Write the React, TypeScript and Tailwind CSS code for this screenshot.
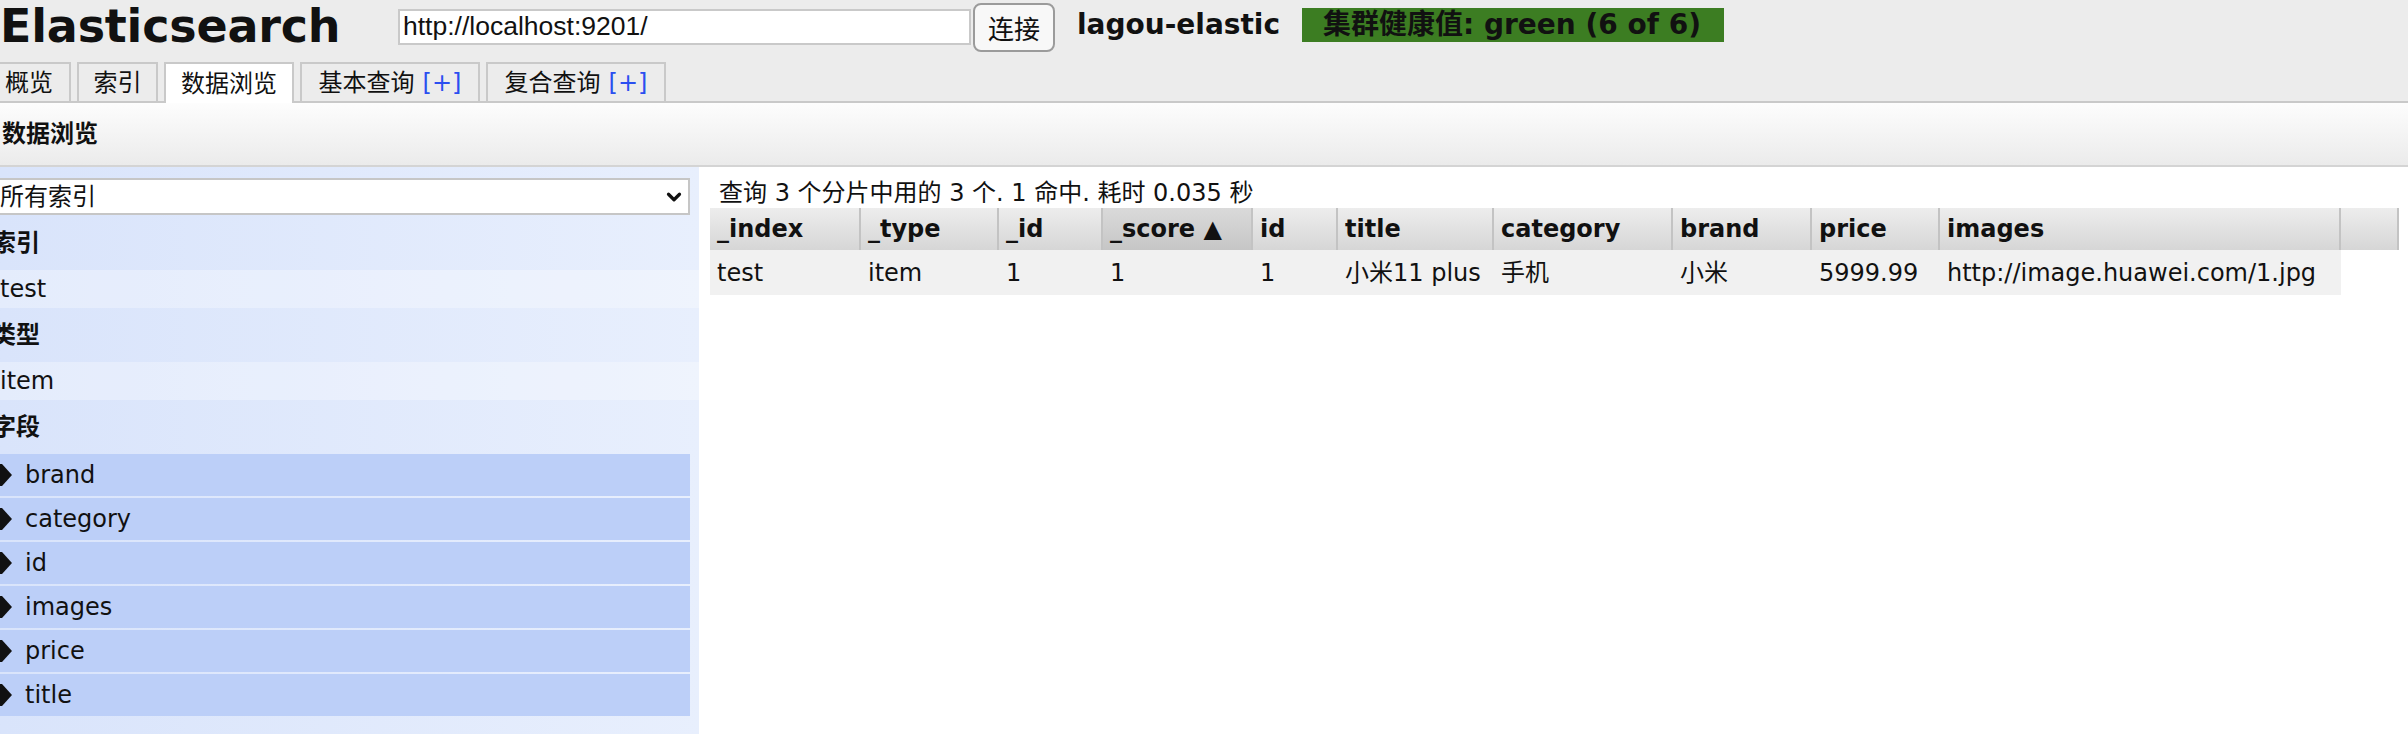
import { ChevronDown } from 'lucide-react'

const tabs = [
  { label: '概览', w: 'w-[84px]', active: false, plus: false },
  { label: '索引', w: 'w-[81px]', active: false, plus: false },
  { label: '数据浏览', w: 'w-[130px]', active: true, plus: false },
  { label: '基本查询', w: 'w-[180px]', active: false, plus: true },
  { label: '复合查询', w: 'w-[180px]', active: false, plus: true },
]

const columns = [
  { key: '_index', w: 'w-[151px]', value: 'test' },
  { key: '_type', w: 'w-[138px]', value: 'item' },
  { key: '_id', w: 'w-[104px]', value: '1' },
  { key: '_score ▲', w: 'w-[150px]', value: '1', sorted: true },
  { key: 'id', w: 'w-[85px]', value: '1' },
  { key: 'title', w: 'w-[156px]', value: '小米11 plus' },
  { key: 'category', w: 'w-[179px]', value: '手机' },
  { key: 'brand', w: 'w-[139px]', value: '小米' },
  { key: 'price', w: 'w-[128px]', value: '5999.99' },
  { key: 'images', w: 'w-[401px]', value: 'http://image.huawei.com/1.jpg' },
]

const fields = ['brand', 'category', 'id', 'images', 'price', 'title']

function Arrow() {
  return (
    <svg width="20" height="22" viewBox="0 0 20 22" className="-ml-[7px] shrink-0">
      <polygon points="0,0 9,0 19,11 9,22 0,22" fill="#111" />
    </svg>
  )
}

function SectionHeader({ label, h }: { label: string; h: string }) {
  return (
    <div className={`${h} flex items-center -ml-[8px] font-bold`}>{label}</div>
  )
}

function SectionValue({ label }: { label: string }) {
  return <div className="h-[38px] flex items-center bg-white/30 w-[699px]">{label}</div>
}

export default function App() {
  return (
    <div className="w-[2408px] h-[734px] overflow-hidden bg-white text-[#111] font-['DejaVu_Sans','Noto_Sans_CJK_SC',sans-serif] text-[24px]">
      {/* header */}
      <div className="bg-[#ececec]">
        <div className="h-[62px] flex items-start">
          <h1 className="w-[398px] h-[52px] text-[46px] leading-[52px] font-bold tracking-[-0.2px] whitespace-nowrap">Elasticsearch</h1>
          <div className="mt-[9px] w-[573px] h-[36px] bg-white border-2 border-[#c9c9c9] pl-[3px] flex items-center font-['Liberation_Sans',sans-serif] text-[26.5px]">
            http://localhost:9201/
          </div>
          <button className="mt-[3px] ml-[2px] w-[82px] h-[49px] rounded-[8px] border-2 border-[#9b9b9b] bg-[#f8f8f8] text-[26px] font-['Noto_Sans_CJK_SC',sans-serif] flex items-center justify-center">
            连接
          </button>
          <div className="ml-[22px] mt-[11px] text-[28px] leading-[28px] font-bold">lagou-elastic</div>
          <div className="ml-[22px] mt-[8px] w-[422px] h-[34px] bg-[#3c7d22] pl-[21px] text-[28px] leading-[34px] font-bold text-[#111] whitespace-nowrap">
            集群健康值: green (6 of 6)
          </div>
        </div>

        {/* tabs */}
        <div className="h-[41px] flex items-start gap-[6px] -ml-[13px] border-b-2 border-[#c9c9c9]">
          {tabs.map((t) => (
            <div
              key={t.label}
              className={`${t.w} border-2 border-b-0 border-[#c9c9c9] flex items-center justify-center whitespace-nowrap ${
                t.active ? 'h-[41px] bg-white relative z-10' : 'h-[39px] bg-[#ececec]'
              }`}
            >
              {t.label}
              {t.plus && <span className="ml-[8px] text-[#2b4ff0]">[+]</span>}
            </div>
          ))}
        </div>
      </div>

      {/* page title bar */}
      <div className="h-[64px] bg-gradient-to-b from-[#fdfdfd] to-[#ebebeb] border-b-2 border-[#d4d4d4] flex items-center pl-[2px] font-bold">
        数据浏览
      </div>

      <div className="flex h-[567px]">
        {/* sidebar */}
        <div className="w-[699px] h-full bg-gradient-to-r from-[#d9e4fb] to-[#e8effd] pt-[11px]">
          <div className="-ml-[3px] w-[693px] h-[37px] bg-white border-2 border-[#c6c6c6] flex items-center justify-between pl-[1px] pr-[3px]">
            <span>所有索引</span>
            <ChevronDown size={22} strokeWidth={3.5} className="text-[#111]" />
          </div>
          <SectionHeader label="索引" h="h-[55px]" />
          <SectionValue label="test" />
          <SectionHeader label="类型" h="h-[54px]" />
          <SectionValue label="item" />
          <SectionHeader label="字段" h="h-[54px]" />
          <div className="flex flex-col gap-[2px]">
            {fields.map((f) => (
              <div key={f} className="w-[690px] h-[42px] bg-[#bccff8] flex items-center">
                <Arrow />
                <span className="ml-[12px]">{f}</span>
              </div>
            ))}
          </div>
        </div>

        {/* results */}
        <div className="flex-1 pt-[11px] pl-[11px]">
          <div className="h-[30px] leading-[30px] ml-[9px] whitespace-nowrap">
            查询 3 个分片中用的 3 个. 1 命中. 耗时 0.035 秒
          </div>
          <div className="flex">
            {columns.map((c) => (
              <div
                key={c.key}
                className={`${c.w} h-[42px] border-r-2 border-[#c3c3c3] pl-[7px] flex items-center font-bold whitespace-nowrap bg-gradient-to-b ${
                  c.sorted ? 'from-[#dadada] to-[#c6c6c6]' : 'from-[#ededed] to-[#d6d6d6]'
                }`}
              >
                {c.key}
              </div>
            ))}
            <div className="w-[58px] h-[42px] border-r-2 border-[#c3c3c3] bg-gradient-to-b from-[#ededed] to-[#d6d6d6]" />
          </div>
          <div className="flex">
            {columns.map((c) => (
              <div
                key={c.key}
                className={`${c.w} h-[45px] bg-[#f1f1f1] pl-[7px] flex items-center whitespace-nowrap`}
              >
                {c.value}
              </div>
            ))}
          </div>
        </div>
      </div>
    </div>
  )
}
